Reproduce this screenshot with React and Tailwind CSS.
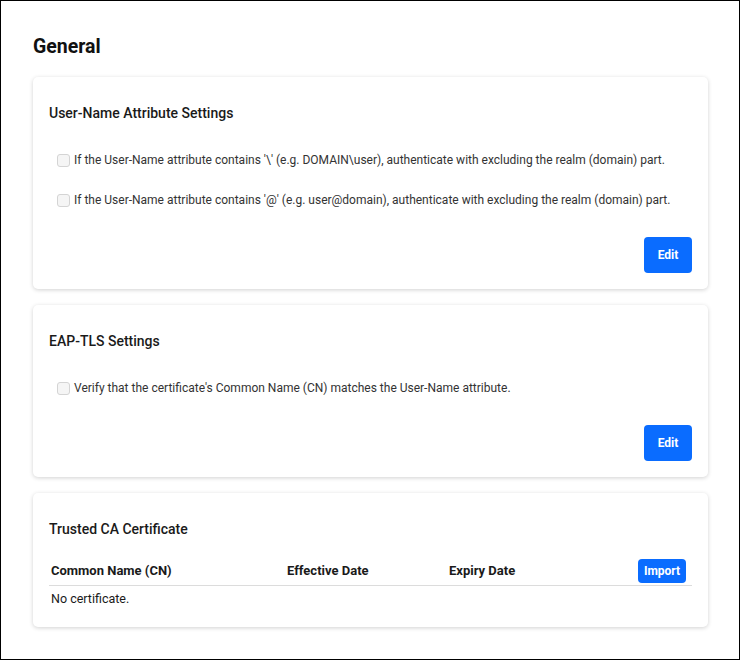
import { useState } from "react";

function Checkbox({ label }) {
    const [checked, setChecked] = useState(false);
    return (
        <label className="flex h-5 items-center">
            <input
                type="checkbox"
                checked={checked}
                onChange={() => setChecked(!checked)}
                disabled
                className="ml-2 mr-1 h-[13px] w-[13px] appearance-none rounded-[3px] border border-[#d4d4d4] bg-[#f5f5f5]"
            />
            <span className="text-[12px] text-[#333]">{label}</span>
        </label>
    );
}

function Card({ title, children }) {
    return (
        <section className="rounded-[5px] bg-white px-4 pt-[25px] pb-4 shadow-[0_1px_4px_rgba(0,0,0,0.18)]">
            <h2 className="text-[14px] font-medium leading-[22px] text-[#1a1a1a]">{title}</h2>
            {children}
        </section>
    );
}

function EditButton() {
    return (
        <div className="mt-[27px] flex justify-end">
            <button className="h-9 w-12 rounded-[4px] bg-[#0a6cff] text-[12px] font-bold text-white">Edit</button>
        </div>
    );
}

export default function App() {
    return (
        <div
            className="h-[660px] w-[740px] border border-black bg-white pl-8 pr-[31px] pt-[35px]"
            style={{ fontFamily: "Roboto, 'Liberation Sans', sans-serif" }}
        >
            <h1 className="text-[19.5px] font-bold leading-[22px] text-[#111]">General</h1>

            <div className="mt-[19px] flex flex-col gap-4">
                <Card title="User-Name Attribute Settings">
                    <div className="mt-[26px] flex flex-col gap-5">
                        <Checkbox label="If the User-Name attribute contains '\' (e.g. DOMAIN\user), authenticate with excluding the realm (domain) part." />
                        <Checkbox label="If the User-Name attribute contains '@' (e.g. user@domain), authenticate with excluding the realm (domain) part." />
                    </div>
                    <EditButton />
                </Card>

                <Card title="EAP-TLS Settings">
                    <div className="mt-[26px]">
                        <Checkbox label="Verify that the certificate's Common Name (CN) matches the User-Name attribute." />
                    </div>
                    <EditButton />
                </Card>

                <Card title="Trusted CA Certificate">
                    <table className="mt-[19px] w-full text-[12px] text-[#1a1a1a]">
                        <thead>
                            <tr className="border-b border-[#dcdcdc]">
                                <th className="w-[236px] px-0.5 pb-0.5 text-left text-[13px] font-bold">Common Name (CN)</th>
                                <th className="w-[162px] px-0.5 pb-0.5 text-left text-[13px] font-bold">Effective Date</th>
                                <th className="px-0.5 pb-0.5 text-left text-[13px] font-bold">Expiry Date</th>
                                <th className="px-1.5 pb-0.5 text-right">
                                    <button className="h-6 w-12 rounded-[4px] bg-[#0a6cff] text-[12px] font-bold text-white">Import</button>
                                </th>
                            </tr>
                        </thead>
                        <tbody>
                            <tr>
                                <td colSpan={4} className="px-0.5 pt-1 pb-0.5 text-[12.5px]">No certificate.</td>
                            </tr>
                        </tbody>
                    </table>
                </Card>
            </div>
        </div>
    );
}
